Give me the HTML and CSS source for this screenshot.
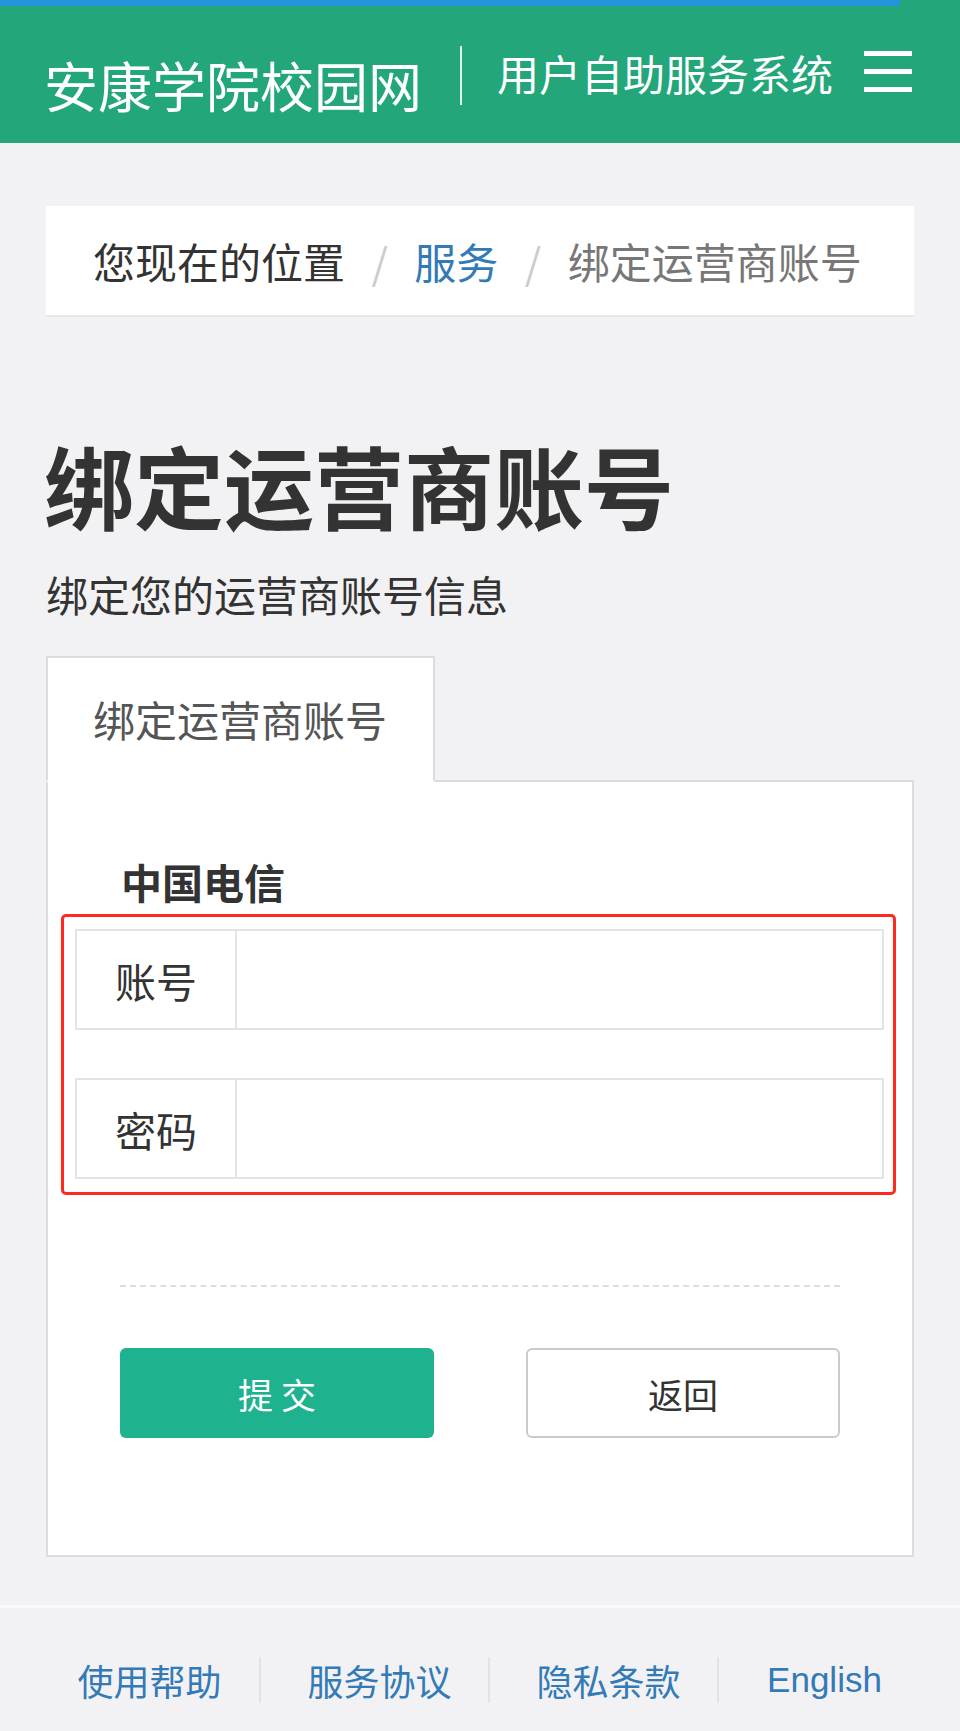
FILE: index.html
```html
<!DOCTYPE html>
<html lang="zh-CN">
<head>
  <meta charset="UTF-8" />
  <meta name="viewport" content="width=device-width, initial-scale=1.0"/>
  <title>绑定运营商账号 - 用户自助服务系统</title>
  <link rel="stylesheet" href="styles.css">
</head>
<body>
  <div class="progress"></div>
  <header class="topbar">
    <div class="brand">安康学院校园网</div>
    <div class="brand-divider"></div>
    <div class="brand-sub">用户自助服务系统</div>
    <div class="menu-btn">
      <span></span>
      <span></span>
      <span></span>
    </div>
  </header>

  <div class="container">
    <div class="breadcrumb">
      <span>您现在的位置</span>
      <span class="sep">/</span>
      <a href="#">服务</a>
      <span class="sep">/</span>
      <span class="current">绑定运营商账号</span>
    </div>

    <h1>绑定运营商账号</h1>
    <p class="lead">绑定您的运营商账号信息</p>

    <div class="tabs">
      <div class="tab active">绑定运营商账号</div>
    </div>

    <div class="panel">
      <div class="isp-name">中国电信</div>

      <div class="highlight">
        <div class="input-group">
          <label class="addon">账号</label>
          <input type="text" class="field" />
        </div>
        <div class="input-group">
          <label class="addon">密码</label>
          <input type="password" class="field" />
        </div>
      </div>

      <div class="dashed"></div>

      <div class="actions">
        <button class="btn btn-submit">提 交</button>
        <button class="btn btn-back">返回</button>
      </div>
    </div>
  </div>

  <footer class="footer">
    <a href="#">使用帮助</a>
    <a href="#">服务协议</a>
    <a href="#">隐私条款</a>
    <a href="#" class="en">English</a>
  </footer>
</body>
</html>
```

FILE: styles.css
```css
body {
  margin: 0;
  background: #f2f2f4;
  font-family: "Noto Sans CJK SC", "Liberation Sans", sans-serif;
  color: #333;
}

.progress {
  position: absolute;
  top: 0;
  left: 0;
  width: 900px;
  height: 6px;
  background: #2395dc;
}

.topbar {
  height: 143px;
  background: #22a67a;
  color: #fff;
  display: flex;
  align-items: flex-start;
  padding-left: 44px;
  box-sizing: border-box;
}

.brand {
  font-size: 54px;
  line-height: 54px;
  margin-top: 58px;
}

.brand-divider {
  width: 2px;
  height: 59px;
  margin-top: 46px;
  margin-left: 38px;
  background: rgba(255, 255, 255, 0.85);
}

.brand-sub {
  font-size: 42px;
  line-height: 42px;
  margin-top: 52px;
  margin-left: 35px;
}

.menu-btn {
  width: 48px;
  margin-top: 51px;
  margin-left: 31px;
  display: flex;
  flex-direction: column;
  gap: 13px;
}

.menu-btn span {
  display: block;
  height: 5px;
  background: #fff;
}

.container {
  padding: 0 46px;
}

.breadcrumb {
  margin-top: 63px;
  background: #fff;
  border-bottom: 2px solid #e6e6e8;
  padding: 34px 47px 33px;
  font-size: 42px;
  line-height: 42px;
  color: #333;
}

.breadcrumb a {
  color: #337ab7;
  text-decoration: none;
}

.breadcrumb .sep {
  color: #ccc;
  padding: 0 17px;
}

.breadcrumb .current {
  color: #777;
}

h1 {
  margin: 122px 0 0 -2px;
  font-size: 90px;
  line-height: 90px;
  font-weight: bold;
  color: #333;
}

.lead {
  margin: 44px 0 0;
  font-size: 42px;
  line-height: 42px;
  color: #333;
}

.tabs {
  margin-top: 41px;
  display: flex;
  margin-bottom: -2px;
  position: relative;
  z-index: 1;
}

.tab {
  background: #fff;
  border: 2px solid #dcdcdf;
  border-bottom-color: #fff;
  padding: 40px 46px 40px 45px;
  font-size: 42px;
  line-height: 42px;
  color: #555;
}

.panel {
  background: #fff;
  border: 2px solid #dcdcdf;
  padding: 0 0 117px;
}

.isp-name {
  margin: 79px 0 0 73px;
  font-size: 41px;
  line-height: 41px;
  font-weight: bold;
  color: #333;
}

.highlight {
  margin: 12px 16px 0 13px;
  border: 3px solid #ff2a1f;
  border-radius: 5px;
  padding: 12px 9px 13px 11px;
}

.input-group {
  display: flex;
  height: 101px;
  box-sizing: border-box;
  border: 2px solid #e4e4e6;
}

.input-group + .input-group {
  margin-top: 48px;
}

.addon {
  width: 158px;
  flex: none;
  display: flex;
  align-items: center;
  justify-content: center;
  border-right: 2px solid #e4e4e6;
  font-size: 41px;
  color: #333;
}

.field {
  flex: 1;
  border: none;
  outline: none;
  font-size: 36px;
  padding: 0 20px;
  background: #fff;
}

.dashed {
  margin: 90px 72px 0;
  border-top: 2px dashed #dedede;
}

.actions {
  margin: 61px 72px 0;
  display: flex;
  justify-content: space-between;
}

.btn {
  width: 314px;
  height: 90px;
  border-radius: 6px;
  font-family: inherit;
  font-size: 35px;
  cursor: pointer;
}

.btn-submit {
  background: #1fb28f;
  border: none;
  color: #fff;
}

.btn-back {
  background: #fff;
  border: 2px solid #cbcbcb;
  color: #333;
}

.footer {
  margin-top: 48px;
  border-top: 3px solid #fafafb;
  height: 125px;
  box-sizing: border-box;
  padding: 49px 0 0 30px;
  display: grid;
  grid-template-columns: repeat(4, 229px);
  align-items: start;
}

.footer a {
  font-size: 36px;
  line-height: 36px;
  padding: 5px 0 5px 10px;
  color: #337ab7;
  text-decoration: none;
  text-align: center;
}

.footer a + a {
  border-left: 2px solid #e3e3e5;
}

.footer .en {
  font-family: "Liberation Sans", sans-serif;
  font-size: 35px;
  padding-right: 26px;
}
```
